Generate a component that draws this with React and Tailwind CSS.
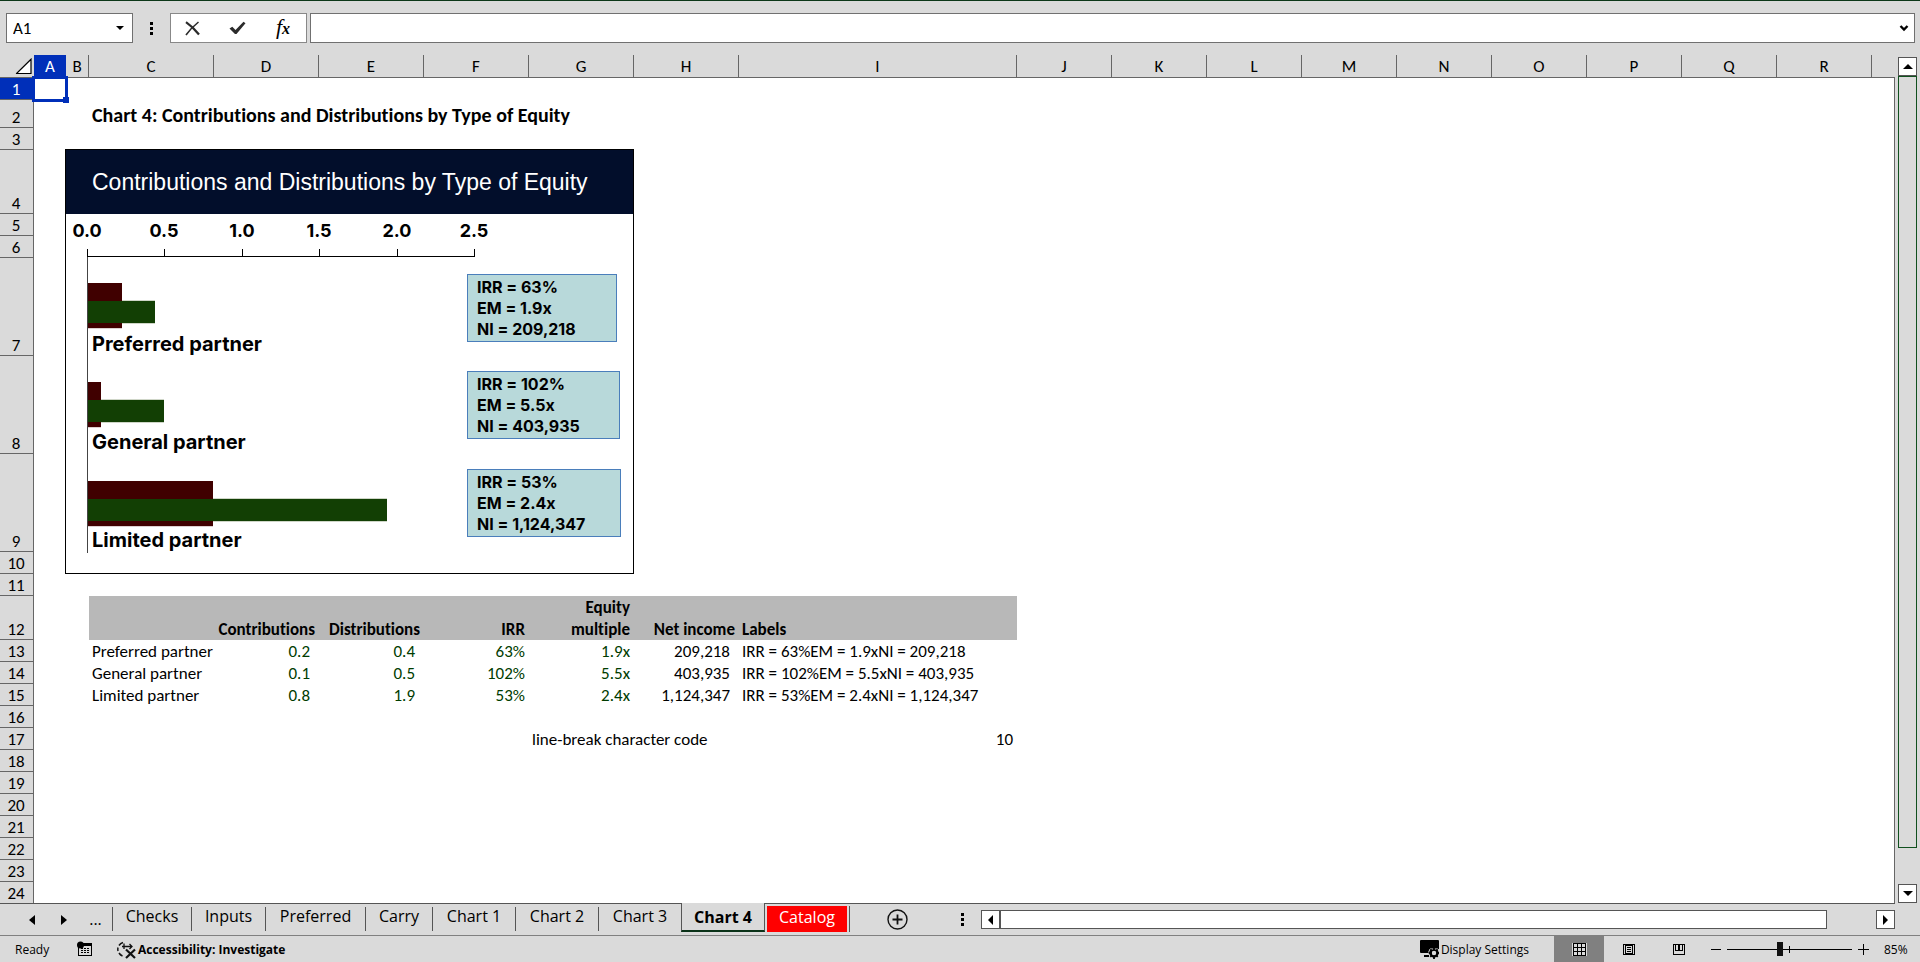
const columns = [
  { name: 'A', width: 'w-[32px]' },
  { name: 'B', width: 'w-[23px]' },
  { name: 'C', width: 'w-[125px]' },
  { name: 'D', width: 'w-[105px]' },
  { name: 'E', width: 'w-[105px]' },
  { name: 'F', width: 'w-[105px]' },
  { name: 'G', width: 'w-[105px]' },
  { name: 'H', width: 'w-[105px]' },
  { name: 'I', width: 'w-[278px]' },
  ...['J', 'K', 'L', 'M', 'N', 'O', 'P', 'Q', 'R'].map((name) => ({ name, width: 'w-[95px]' })),
];

const rowHeights = {
  2: 'h-[28px]',
  4: 'h-[64px]',
  7: 'h-[98px]',
  8: 'h-[98px]',
  9: 'h-[98px]',
  12: 'h-[44px]',
};

const partners = [
  { name: 'Preferred partner', contributions: '0.2', distributions: '0.4', irr: '63%', multiple: '1.9x', income: '209,218' },
  { name: 'General partner', contributions: '0.1', distributions: '0.5', irr: '102%', multiple: '5.5x', income: '403,935' },
  { name: 'Limited partner', contributions: '0.8', distributions: '1.9', irr: '53%', multiple: '2.4x', income: '1,124,347' },
];

const head = 'bg-[#b8b8b8] font-bold ';
const cells = {
  A1: { className: 'relative', content: <Selection /> },
  C2: { className: 'pl-[3px] pb-[3px] text-[20px] font-bold', content: 'Chart 4: Contributions and Distributions by Type of Equity' },
  B4: { className: 'relative', content: <EquityChart /> },
  C12: { className: head },
  D12: { className: head + 'pr-[4px] text-right', content: 'Contributions' },
  E12: { className: head + 'pr-[4px] text-right', content: 'Distributions' },
  F12: { className: head + 'pr-[4px] text-right', content: 'IRR' },
  G12: { className: head + 'pr-[4px] text-right', content: <span className="-mb-px block leading-[22px]">Equity<br />multiple</span> },
  H12: { className: head + 'pr-[4px] text-right', content: 'Net income' },
  I12: { className: head + 'pl-[3px]', content: 'Labels' },
  G17: { className: 'pl-[3px]', content: 'line-break character code' },
  I17: { className: 'pr-[4px] text-right', content: '10' },
};
partners.forEach((p, i) => {
  const r = 13 + i;
  const green = 'text-[#003c00] text-right ';
  cells['C' + r] = { className: 'pl-[3px]', content: p.name };
  cells['D' + r] = { className: green + 'pr-[9px]', content: p.contributions };
  cells['E' + r] = { className: green + 'pr-[9px]', content: p.distributions };
  cells['F' + r] = { className: green + 'pr-[4px]', content: p.irr };
  cells['G' + r] = { className: green + 'pr-[4px]', content: p.multiple };
  cells['H' + r] = { className: 'pr-[9px] text-right', content: p.income };
  cells['I' + r] = { className: 'pl-[3px]', content: `IRR = ${p.irr}EM = ${p.multiple}NI = ${p.income}` };
});

function Selection() {
  return (
    <span className="absolute -inset-[2px] z-10 border-3 border-[#002fb9]">
      <span className="absolute -right-[4px] -bottom-[4px] size-[6px] bg-[#002fb9]" />
    </span>
  );
}

const bars = [
  { y: 69, baseline: 137, contributed: 34, distributed: 67, label: 'Preferred partner' },
  { y: 168, baseline: 235, contributed: 13, distributed: 76, label: 'General partner' },
  { y: 267, baseline: 333, contributed: 125, distributed: 299, label: 'Limited partner' },
];
const ticks = ['0.0', '0.5', '1.0', '1.5', '2.0', '2.5'];

function EquityChart() {
  const callout = 'absolute left-[401px] border border-[#4a7ebb] bg-[#b8d9da] pl-[9px] pt-[2px] text-[16px] leading-[21px] font-bold ';
  const places = ['top-[60px] h-[68px] w-[150px]', 'top-[157px] h-[68px] w-[153px]', 'top-[255px] h-[68px] w-[154px]'];
  return (
    <div className="absolute -top-px -left-px w-[569px] border border-black bg-white font-['Inter','Lato',sans-serif] whitespace-nowrap text-black">
      <h2 className="flex h-[64px] items-center bg-[#020e2b] pl-[26px] font-['Liberation_Sans',Arial,sans-serif] text-[23px] text-white">
        Contributions and Distributions by Type of Equity
      </h2>
      <div className="relative h-[359px]">
        <svg className="block h-full w-full" viewBox="0 0 567 359" shapeRendering="crispEdges">
          <path d="M21.5 35V339" stroke="#444" fill="none" />
          <path d="M21 42.5H409" stroke="#000" fill="none" />
          {ticks.map((t, i) => {
            const x = 21 + Math.round(i * 77.4);
            return (
              <g key={t}>
                <path d={`M${x + 0.5} 35V43`} stroke="#000" fill="none" />
                <text x={x} y="23" textAnchor="middle" fontSize="18" fontWeight="700">{t}</text>
              </g>
            );
          })}
          {bars.map((b) => (
            <g key={b.label}>
              <rect x="22" y={b.y + 45} width={b.contributed} height="1" fill="#ddd0d0" />
              <rect x="22" y={b.y} width={b.contributed} height="45" fill="#400000" />
              <rect x={22 + b.contributed} y={b.y + 17} width={b.distributed - b.contributed} height="24" fill="#cfd6c8" />
              <rect x="22" y={b.y + 18} width={b.distributed} height="22" fill="#123f04" />
              <text x="26" y={b.baseline} fontSize="20" fontWeight="700">{b.label}</text>
            </g>
          ))}
        </svg>
        {partners.map((p, i) => (
          <div key={p.name} className={callout + places[i]}>
            <p>IRR = {p.irr}</p>
            <p>EM = {p.multiple}</p>
            <p>NI = {p.income}</p>
          </div>
        ))}
      </div>
    </div>
  );
}

function Dots() {
  return (
    <svg className="h-[13px] w-[3px] shrink-0" viewBox="0 0 3 13" shapeRendering="crispEdges">
      <path d="M0 0h3v3H0zM0 5h3v3H0zM0 10h3v3H0z" />
    </svg>
  );
}

function FormulaBar() {
  return (
    <header className="flex h-[55px] shrink-0 items-start border-t border-[#0c3718] pt-[12px] pr-[5px] pl-[6px]">
      <div className="flex h-[30px] w-[127px] items-center border border-[#707070] bg-white">
        <input aria-label="Name box" defaultValue="A1" className="h-full w-[100px] pt-px pl-[6px] text-[17px] outline-none" />
        <button aria-label="Open name list" className="flex h-full flex-1 items-center justify-center">
          <svg className="h-[4px] w-[8px]" viewBox="0 0 8 4"><path d="M0 0h8L4 4z" /></svg>
        </button>
      </div>
      <div className="flex h-[30px] w-[37px] items-center justify-center"><Dots /></div>
      <div className="mr-[3px] flex h-[30px] w-[137px] items-center border border-[#888] bg-white">
        <button aria-label="Cancel" className="flex h-full w-[42px] items-center justify-center">
          <svg className="size-[15px]" viewBox="0 0 15 15" fill="none" stroke="#2b2b2b">
            <path d="M1 1.2C5 4 10 8.500 14 13.500" strokeWidth="2.200" />
            <path d="M13.500 1C8.500 5 4.500 9 1 14" strokeWidth="1.600" />
          </svg>
        </button>
        <button aria-label="Enter" className="flex h-full w-[48px] items-center justify-center">
          <svg className="h-[14px] w-[17px]" viewBox="0 0 17 14" fill="#2b2b2b">
            <path d="M.5 7.500L3.300 5.800 6.500 9 14.500.8 16.500 2.300 7.500 13 6 13z" />
          </svg>
        </button>
        <button aria-label="Insert function" className="flex h-full w-[44px] items-center justify-center pb-[2px] font-['Liberation_Serif',serif] text-[22px] leading-none italic">
          f<span className="pt-[4px] text-[16px] font-bold">x</span>
        </button>
      </div>
      <div className="flex h-[30px] flex-1 items-center border border-[#707070] bg-white">
        <input aria-label="Formula bar" className="h-full flex-1 px-1 text-[17px] outline-none" />
        <button aria-label="Expand formula bar" className="flex h-full w-[20px] items-center justify-center">
          <svg className="h-[7px] w-[10px]" viewBox="0 0 10 7"><path d="M1.500 1L5 4.500 8.500 1" fill="none" stroke="#000" strokeWidth="2.400" /></svg>
        </button>
      </div>
    </header>
  );
}

function Sheet() {
  const rows = Array.from({ length: 24 }, (_, i) => i + 1);
  return (
    <table className="w-full table-fixed border-separate border-spacing-0 text-[17px] leading-[20px] whitespace-nowrap [font-variant-ligatures:none]">
      <thead>
        <tr className="h-[23px]">
          <th className="w-[34px] border-b border-[#666] p-0">
            <button aria-label="Select all" className="flex h-[22px] w-full items-center justify-end pr-[2px]">
              <svg className="size-[17px]" viewBox="0 0 17 17"><path d="M1.500 16V15.500L16 1.200V15.500H1.500" fill="#fff" stroke="#000" strokeWidth="1.200" /></svg>
            </button>
          </th>
          {columns.map((c) => (
            <th
              key={c.name}
              scope="col"
              className={`${c.width} border-b border-[#666] p-0 pt-[2px] font-normal ${c.name === 'A' ? 'bg-[#002fb9] text-white' : 'border-r'}`}
            >
              {c.name}
            </th>
          ))}
          <th className="border-b border-[#666] p-0" />
        </tr>
      </thead>
      <tbody>
        {rows.map((r) => (
          <tr key={r} className={rowHeights[r] || 'h-[22px]'}>
            <th
              scope="row"
              className={`border-r border-b border-[#666] p-0 pr-px align-bottom leading-[19px] font-normal ${r === 1 ? 'bg-[#002fb9] text-white' : ''}`}
            >
              {r}
            </th>
            {columns.map((c) => {
              const cell = cells[c.name + r];
              return (
                <td key={c.name} className={`p-0 align-bottom ${cell ? cell.className : ''}`}>
                  {cell ? cell.content : null}
                </td>
              );
            })}
            <td className="border-r border-[#666] p-0" />
          </tr>
        ))}
      </tbody>
    </table>
  );
}

function VerticalScroll() {
  const button = 'flex size-[19px] shrink-0 items-center justify-center border border-[#555] bg-white';
  return (
    <div className="flex w-[25px] shrink-0 flex-col items-start pt-[2px] pl-[3px]">
      <button aria-label="Scroll up" className={button}>
        <svg className="h-[5px] w-[10px]" viewBox="0 0 10 5"><path d="M0 5h10L5 0z" /></svg>
      </button>
      <div className="mb-[36px] w-[19px] flex-1 border border-[#10501e]" />
      <button aria-label="Scroll down" className={button}>
        <svg className="h-[5px] w-[10px]" viewBox="0 0 10 5"><path d="M0 0h10L5 5z" /></svg>
      </button>
    </div>
  );
}

const tabs = [
  { name: 'Checks', width: 'w-[79px]' },
  { name: 'Inputs', width: 'w-[74px]' },
  { name: 'Preferred', width: 'w-[100px]' },
  { name: 'Carry', width: 'w-[67px]' },
  { name: 'Chart 1', width: 'w-[83px]' },
  { name: 'Chart 2', width: 'w-[83px]' },
  { name: 'Chart 3', width: 'w-[83px]' },
];

function SheetTabs() {
  const arrow = 'flex w-[32px] items-center justify-center';
  const scroll = 'flex size-[19px] shrink-0 items-center justify-center border border-[#555] bg-white';
  return (
    <nav className="flex h-[33px] shrink-0 border-b border-[#808080] font-['Open_Sans','Noto_Sans',sans-serif] text-[16px]">
      <div className="flex flex-1 border-t border-[#555]">
        <div className="flex w-[112px] items-center pl-[16px]">
          <button aria-label="Previous sheet" className={arrow}>
            <svg className="h-[10px] w-[6px]" viewBox="0 0 6 10"><path d="M6 0v10L0 5z" /></svg>
          </button>
          <button aria-label="Next sheet" className={arrow}>
            <svg className="h-[10px] w-[6px]" viewBox="0 0 6 10"><path d="M0 0v10l6-5z" /></svg>
          </button>
          <button aria-label="More sheets" className="flex h-full w-[31px] items-center justify-center pb-[2px]">
            <span>...</span>
          </button>
        </div>
        <div className="mt-[3px] flex h-[24px]">
          {tabs.map((t) => (
            <button key={t.name} className={`${t.width} border-l border-[#555] pb-[5px] leading-[19px]`}>{t.name}</button>
          ))}
        </div>
        <button className="-mt-px h-[29px] w-[84px] border-x border-b-2 border-x-[#555] border-b-[#0a3218] bg-[#dadada] leading-[20px] font-bold">Chart 4</button>
        <div className="mt-[2px] flex h-[26px] border-r border-[#555] pr-[2px] pl-[2px]">
          <button className="w-[80px] bg-[#f00] pb-[4px] leading-[20px] text-white">Catalog</button>
        </div>
        <button aria-label="New sheet" className="ml-[37px] flex items-center">
          <svg className="size-[21px]" viewBox="0 0 21 21" fill="none" stroke="#111">
            <circle cx="10.500" cy="10.500" r="9.500" strokeWidth="1.400" />
            <path d="M10.500 5.500v10M5.500 10.500h10" strokeWidth="1.800" />
          </svg>
        </button>
        <div className="ml-[53px] flex items-center"><Dots /></div>
        <div className="ml-[17px] flex flex-1 items-center">
          <button aria-label="Scroll left" className={scroll}>
            <svg className="h-[10px] w-[5px]" viewBox="0 0 5 10"><path d="M5 0v10L0 5z" /></svg>
          </button>
          <div className="mr-[49px] h-[19px] flex-1 border border-[#555] bg-white" />
          <button aria-label="Scroll right" className={scroll}>
            <svg className="h-[10px] w-[5px]" viewBox="0 0 5 10"><path d="M0 0v10l5-5z" /></svg>
          </button>
        </div>
      </div>
      <div className="w-[25px]" />
    </nav>
  );
}

function StatusBar() {
  const view = 'flex h-full w-[50px] items-center justify-center';
  return (
    <footer className="flex h-[26px] shrink-0 items-center font-['Open_Sans','Noto_Sans',sans-serif] text-[12px]">
      <span className="ml-[15px] w-[62px] pt-px">Ready</span>
      <button aria-label="Record macro">
        <svg className="block h-[16px] w-[15px]" viewBox="0 0 15 16" shapeRendering="crispEdges">
          <path d="M1.500 6V14.500H14.500V2.500H6" fill="none" stroke="#000" />
          <path d="M6 2h8v3H6z" />
          <path d="M4 7h2v1H4zM7 7h2v1H7zM10 7h2v1h-2zM4 9h2v1H4zM7 9h2v1H7zM10 9h2v1h-2zM4 11h2v1H4zM7 11h2v1H7zM10 11h2v1h-2z" />
          <circle cx="3.500" cy="4" r="3.500" shapeRendering="auto" />
        </svg>
      </button>
      <button className="ml-[24px] flex items-center gap-[2px] pt-px font-bold">
        <svg className="h-[18px] w-[20px]" viewBox="0 0 20 18" fill="none" stroke="#111" strokeWidth="1.500">
          <path d="M7 1.500A7 7 0 0 0 3 4.500M2 6.500A7 7 0 0 0 2 10M3 12A7 7 0 0 0 6.500 15" />
          <path d="M6 5.500H16M13.500 3L16 5.500 13.500 8M8 2.500V8" strokeWidth="1.300" />
          <path d="M10 8.500L19 17M19 8.500L10 17" strokeWidth="2.200" />
        </svg>
        Accessibility: Investigate
      </button>
      <button className="ml-auto flex items-center gap-[2px] pt-px pr-[25px]">
        <svg className="h-[19px] w-[19px]" viewBox="0 0 19 19">
          <path d="M1 0h17a1 1 0 0 1 1 1v8h-8l-1 4H1a1 1 0 0 1-1-1V1a1 1 0 0 1 1-1zM4 15h5v2H4z" />
          <circle cx="14" cy="13" r="3.500" fill="#dadada" stroke="#000" strokeWidth="2.400" />
          <path d="M8.500 12.500L10 9h8" stroke="#dadada" strokeWidth="1" fill="none" />
          <path d="M14 7.500v3M14 15.500v3.500M8.800 13h3M16.500 13h2.500M10.300 9.300l1.800 1.800M17.700 9.300l-1.800 1.800M10.300 16.800l1.800-1.800M17.700 16.800l-1.800-1.800" stroke="#000" strokeWidth="1.800" />
        </svg>
        Display Settings
      </button>
      <button aria-label="Normal view" className={`${view} bg-[#808080]`}>
        <svg className="h-[13px] w-[15px]" viewBox="0 0 15 13" shapeRendering="crispEdges">
          <path d="M0 0h15v13H0z" fill="#dadada" />
          <path d="M1.500 .5h12v12h-12zM1.500 4.500h12M1.500 8.500h12M5.500 .5v12M9.500 .5v12" fill="none" stroke="#000" />
        </svg>
      </button>
      <button aria-label="Page layout view" className={view}>
        <svg className="h-[11px] w-[12px]" viewBox="0 0 12 11" shapeRendering="crispEdges" fill="none" stroke="#000">
          <path d="M.5 .5h11v10H.5zM2.500 1.500h7v8h-7zM4 3.500h4M4 5.500h4M4 7.500h4" />
        </svg>
      </button>
      <button aria-label="Page break view" className={view}>
        <svg className="h-[11px] w-[12px]" viewBox="0 0 12 11" shapeRendering="crispEdges" fill="none" stroke="#000">
          <path d="M.5 .5h11v10H.5zM2.500 0v6.500h3V0M5.500 6.500H9.500V0" />
          <path d="M6 0v6" strokeWidth="2" />
        </svg>
      </button>
      <button aria-label="Zoom out" className="ml-[7px] flex h-full w-[16px] items-center">
        <svg className="h-[11px] w-[11px]" viewBox="0 0 11 11" shapeRendering="crispEdges"><path d="M0 5h10v1H0z" /></svg>
      </button>
      <div className="relative flex h-full w-[125px] items-center">
        <span className="absolute left-[62px] h-[7px] w-px bg-black" />
        <input
          type="range"
          aria-label="Zoom"
          min="0"
          max="100"
          defaultValue="42"
          className="relative h-[14px] w-full appearance-none bg-[linear-gradient(#000,#000)] bg-[length:100%_1px] bg-center bg-no-repeat [&::-webkit-slider-thumb]:h-[14px] [&::-webkit-slider-thumb]:w-[6px] [&::-webkit-slider-thumb]:appearance-none [&::-webkit-slider-thumb]:bg-[#111]"
        />
      </div>
      <button aria-label="Zoom in" className="ml-[6px] flex h-full w-[26px] items-center">
        <svg className="h-[11px] w-[11px]" viewBox="0 0 11 11" shapeRendering="crispEdges"><path d="M0 5h11v1H0zM5 0h1v11H5z" /></svg>
      </button>
      <button className="w-[36px] pt-px text-left">85%</button>
    </footer>
  );
}

export default function App() {
  return (
    <div className="flex h-screen flex-col overflow-hidden bg-[#dadada] font-['Carlito','Lato',sans-serif] text-black">
      <FormulaBar />
      <main className="flex min-h-0 flex-1">
        <div className="min-w-0 flex-1 overflow-hidden">
          <div className="bg-[linear-gradient(#dadada,#dadada),linear-gradient(#dadada,#dadada),linear-gradient(#fff,#fff)] bg-[length:100%_23px,34px_100%,100%_100%] bg-no-repeat">
            <Sheet />
          </div>
        </div>
        <VerticalScroll />
      </main>
      <SheetTabs />
      <StatusBar />
    </div>
  );
}
